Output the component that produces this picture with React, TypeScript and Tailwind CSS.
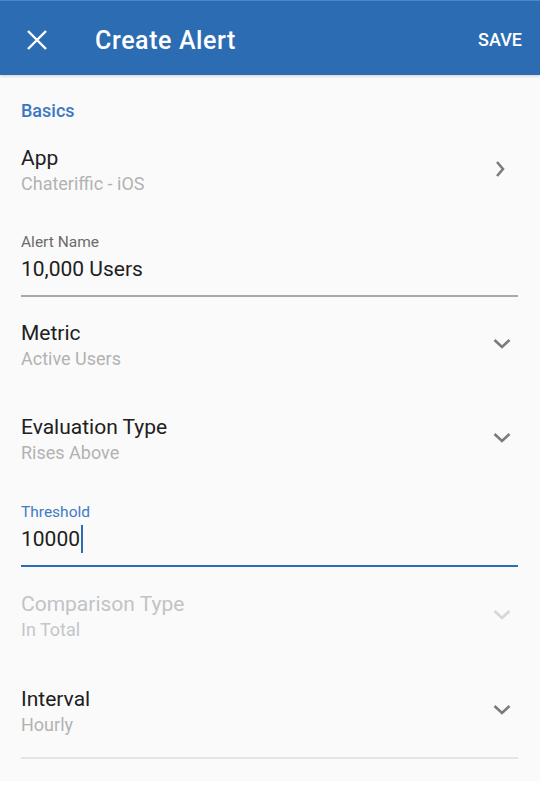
import React from "react";

const font = { fontFamily: "Roboto, 'Noto Sans', sans-serif" };

function ChevronRight({ muted }: { muted?: boolean }) {
  return (
    <svg width="24" height="24" viewBox="0 0 24 24" className="shrink-0">
      <path d="M7 5 L13 12 L7 19" fill="none" stroke={muted ? "#d2d2d2" : "#7b7b7b"} strokeWidth="2.6" strokeLinecap="butt" />
    </svg>
  );
}

function ChevronDown({ muted }: { muted?: boolean }) {
  return (
    <svg width="24" height="24" viewBox="0 0 24 24" className="shrink-0">
      <path d="M4.5 8 L12 15 L19.5 8" fill="none" stroke={muted ? "#d6d6d6" : "#7b7b7b"} strokeWidth="2.6" strokeLinecap="butt" />
    </svg>
  );
}

function SelectRow({
  title,
  value,
  icon,
  disabled,
  className,
}: {
  title: string;
  value: string;
  icon: "right" | "down";
  disabled?: boolean;
  className?: string;
}) {
  return (
    <div className={`flex items-center justify-between pr-[4px] ${className ?? ""}`}>
      <div>
        <div className={`text-[21px] leading-[24px] ${disabled ? "text-[#c1c3c7]" : "text-[#202020]"}`}>{title}</div>
        <div className={`mt-[2px] text-[18px] leading-[24px] ${disabled ? "text-[#c4c6ca]" : "text-[#b2b2b2]"}`}>{value}</div>
      </div>
      <div className="mb-[5px]">
        {icon === "right" ? <ChevronRight muted={disabled} /> : <ChevronDown muted={disabled} />}
      </div>
    </div>
  );
}

export default function App() {
  return (
    <div className="w-[540px] h-[787px] bg-white" style={font}>
      <div className="h-[781px] bg-[#fafafa]">
        <header className="h-[75px] bg-[#2c6cb3] border-t border-[#4f86c4] flex items-center pt-[4px] pl-[25px] pr-[18px] shadow-[0_1px_3px_rgba(0,0,0,0.18)]">
          <svg width="24" height="24" viewBox="0 0 24 24" className="shrink-0">
            <path d="M3 3 L21 21 M21 3 L3 21" stroke="white" strokeWidth="2.4" />
          </svg>
          <h1 className="ml-[46px] text-white text-[25px] font-medium leading-none tracking-[0.6px]">Create Alert</h1>
          <button className="ml-auto text-white text-[18px] font-medium leading-none">SAVE</button>
        </header>

        <div className="pl-[21px] pr-[22px]">
          <div className="mt-[26px] text-[#3a77c3] text-[18px] font-medium leading-[20px]">Basics</div>

          <SelectRow className="mt-[25px]" title="App" value="Chateriffic - iOS" icon="right" />

          <div className="mt-[37px]">
            <div className="text-[15.5px] leading-[18px] text-[#6b6b6b]">Alert Name</div>
            <div className="mt-[6px] text-[21px] leading-[24px] text-[#202020]">10,000 Users</div>
            <div className="mt-[14px] h-[2px] bg-[#a8a8a8]" />
          </div>

          <SelectRow className="mt-[24px]" title="Metric" value="Active Users" icon="down" />
          <SelectRow className="mt-[44px]" title="Evaluation Type" value="Rises Above" icon="down" />

          <div className="mt-[38px]">
            <div className="text-[15.5px] leading-[18px] text-[#3f7cc6]">Threshold</div>
            <div className="mt-[6px] flex items-center h-[24px] text-[21px] leading-[24px] text-[#202020]">
              10000
              <span className="ml-[1px] w-[2px] h-[28px] -my-[2px] bg-[#2c6cb3]" />
            </div>
            <div className="mt-[14px] h-[2px] bg-[#2e6db5]" />
          </div>

          <SelectRow className="mt-[25px]" title="Comparison Type" value="In Total" icon="down" disabled />
          <SelectRow className="mt-[45px]" title="Interval" value="Hourly" icon="down" />

          <div className="mt-[20px] h-[2px] bg-[#e4e4e4]" />
        </div>
      </div>
    </div>
  );
}
